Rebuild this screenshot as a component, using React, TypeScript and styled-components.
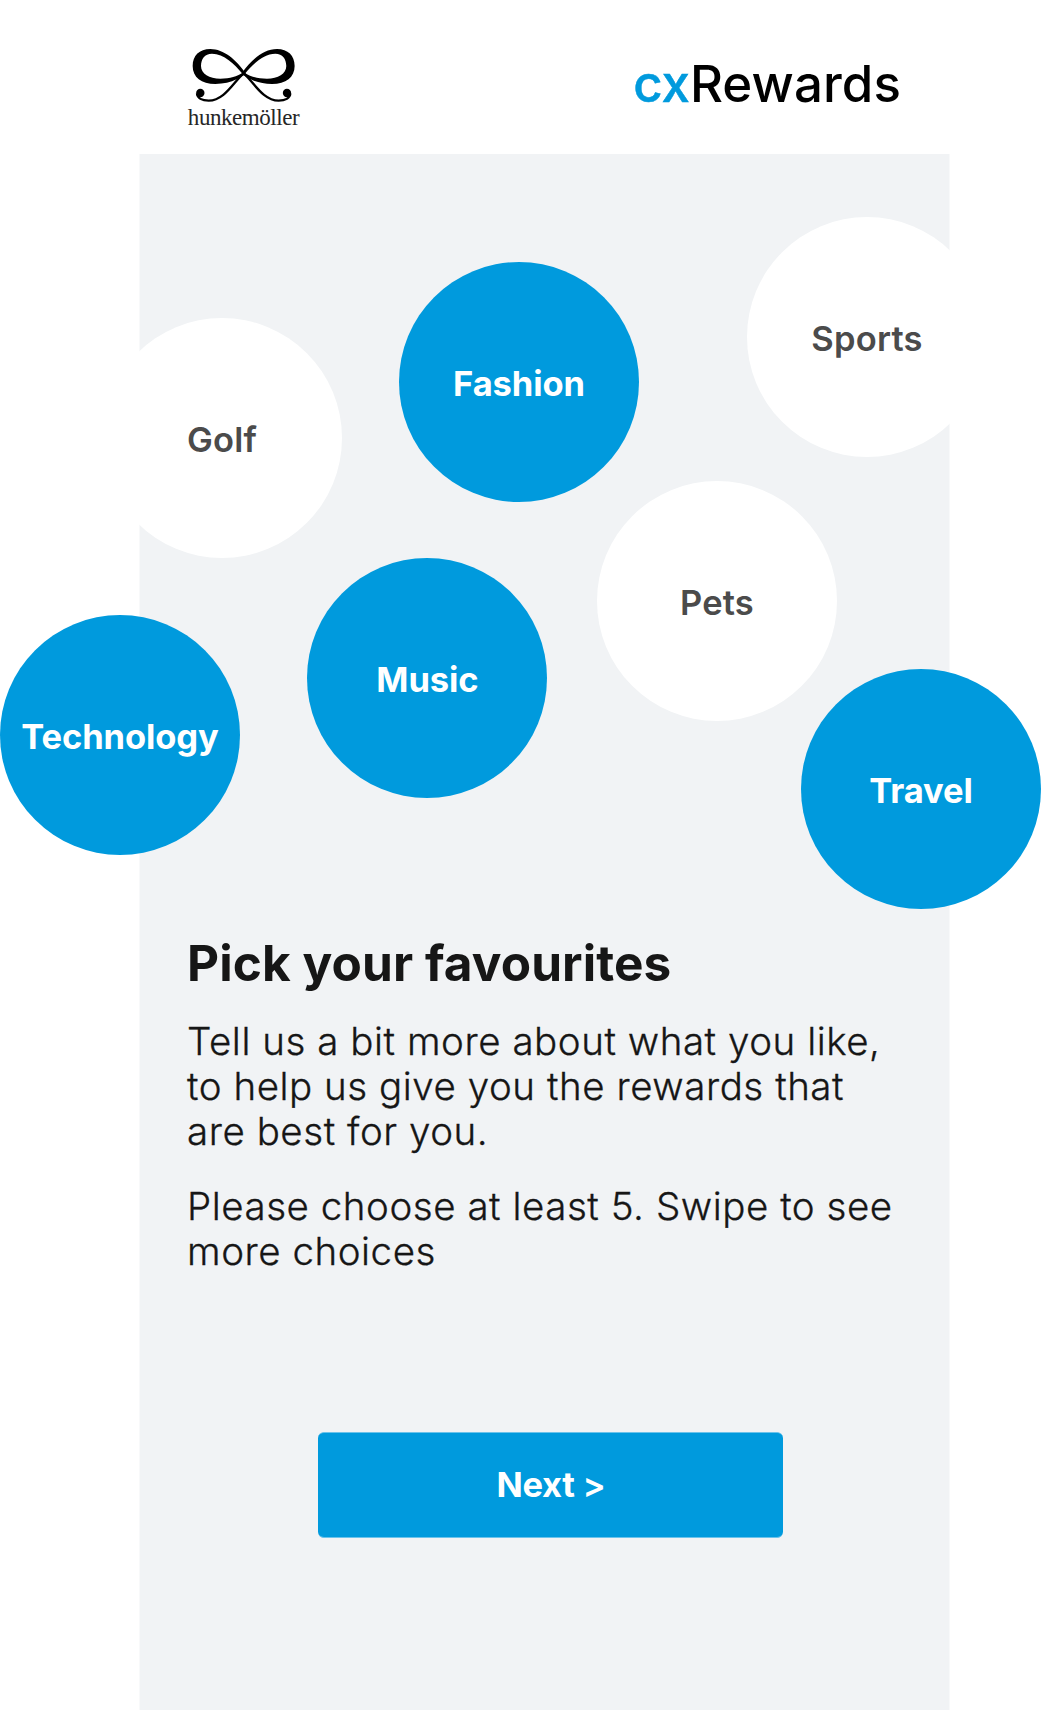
import React, { useState } from "react";
import styled, { createGlobalStyle } from "styled-components";

const BLUE = "#009add";
const PANEL = "#f1f3f5";
const INK = "#161616";
const SANS = `Inter, "Liberation Sans", sans-serif`;

const GlobalStyle = createGlobalStyle`
  *, *::before, *::after { box-sizing: border-box; }
  body { margin: 0; background: #fff; font-family: ${SANS}; overflow-x: hidden; }
`;

const Page = styled.div`
  display: flex;
  flex-direction: column;
  width: 811px;
  min-height: 1710px;
  margin-left: 139px;
`;

const Header = styled.header`
  display: flex;
  justify-content: space-between;
  align-items: flex-start;
  height: 154px;
  padding: 48px 49px 0 49px;
  background: #fff;
`;

const PartnerLogo = styled.div`
  display: flex;
  flex-direction: column;
  align-items: center;
  gap: 2px;
  width: 111px;

  svg {
    display: block;
  }
`;

const PartnerName = styled.span`
  font: 23px/26px "Liberation Serif", serif;
  letter-spacing: -0.45px;
  white-space: nowrap;
  color: #262626;
`;

const Wordmark = styled.div`
  margin-top: 6px;
  font-size: 51px;
  font-weight: 500;
  line-height: 60px;
  letter-spacing: 0.1px;
  color: #000;
`;

const WordmarkAccent = styled.span`
  color: ${BLUE};
  letter-spacing: 0;
  -webkit-text-stroke: 0.5px ${BLUE};
`;

const Panel = styled.main`
  flex: 1;
  display: flex;
  flex-direction: column;
  background: ${PANEL};
  background-clip: padding-box;
  border: solid #f8f9fa;
  border-width: 0 1px;
`;

const BubbleField = styled.div`
  position: relative;
  height: 779px;
`;

const Bubble = styled.button<{ $x: number; $y: number; $selected: boolean }>`
  position: absolute;
  left: ${(p) => p.$x}px;
  top: ${(p) => p.$y}px;
  display: flex;
  align-items: center;
  justify-content: center;
  width: 240px;
  height: 240px;
  padding: 3px 0 0;
  border: 0;
  border-radius: 50%;
  background: ${(p) => (p.$selected ? BLUE : "#fff")};
  color: ${(p) => (p.$selected ? "#fff" : "#4b4b4b")};
  font-family: ${SANS};
  font-size: 34.5px;
  font-weight: ${(p) => (p.$selected ? 700 : 600)};
  letter-spacing: ${(p) => (p.$selected ? -0.1 : 0.2)}px;
  cursor: pointer;
`;

const Copy = styled.section`
  display: flex;
  flex-direction: column;
  padding: 0 47px;
  color: ${INK};
`;

const Title = styled.h1`
  margin: 0 0 26px;
  font-size: 49.5px;
  font-weight: 700;
  line-height: 60px;
  letter-spacing: 0.1px;
`;

const Paragraph = styled.p`
  margin: 0 0 30px;
  font-size: 38.5px;
  font-weight: 300;
  line-height: 45px;
  letter-spacing: 0.54px;
  white-space: nowrap;
  -webkit-text-stroke: 0.3px ${INK};

  &:last-child {
    margin-bottom: 0;
  }
`;

const NextButton = styled.button`
  width: 465px;
  height: 106px;
  margin: 158px 0 0 178px;
  padding: 0 0 2px 1px;
  border: solid #6cc3eb;
  border-width: 1px 0;
  border-radius: 6px;
  background: ${BLUE};
  color: #fff;
  font-family: ${SANS};
  font-size: 34.5px;
  font-weight: 700;
  letter-spacing: -0.3px;
  cursor: pointer;
`;

const Chevron = styled.span`
  font-weight: 600;
`;

interface Interest {
  name: string;
  x: number;
  y: number;
  selected: boolean;
}

const INTERESTS: Interest[] = [
  { name: "Golf", x: -38, y: 164, selected: false },
  { name: "Fashion", x: 259, y: 108.4, selected: true },
  { name: "Sports", x: 607, y: 63.4, selected: false },
  { name: "Pets", x: 457, y: 327.4, selected: false },
  { name: "Music", x: 167.4, y: 404, selected: true },
  { name: "Technology", x: -140, y: 461, selected: true },
  { name: "Travel", x: 661, y: 515, selected: true },
];

const BowHalf = () => (
  <>
    <path
      fillRule="evenodd"
      d="M180 87C154 48 115 15 75 15C42 15 22 35 22 66C22 100 48 120 90 120C115 120 136 115 154 106L180 91ZM170 88C149 61 115 29 80 29C58 29 47 45 47 66C47 90 72 104 105 104C135 104 156 97 170 88Z"
    />
    <path
      d="M175 88C146 112 118 170 70 170C50 170 36 162 35 148"
      fill="none"
      stroke="#000"
      strokeWidth="7"
    />
    <circle cx="45" cy="147" r="12.5" />
  </>
);

const Bow = () => (
  <svg width="103.3" height="54.7" viewBox="20 12 310 164" aria-hidden="true">
    <BowHalf />
    <g transform="translate(350 0) scale(-1 1)">
      <BowHalf />
    </g>
  </svg>
);

export default function App() {
  const [interests, setInterests] = useState(INTERESTS);

  const toggle = (name: string) =>
    setInterests((list) =>
      list.map((i) => (i.name === name ? { ...i, selected: !i.selected } : i))
    );

  return (
    <>
      <GlobalStyle />
      <Page>
        <Header>
          <PartnerLogo>
            <Bow />
            <PartnerName>hunkemöller</PartnerName>
          </PartnerLogo>
          <Wordmark>
            <WordmarkAccent>cx</WordmarkAccent>Rewards
          </Wordmark>
        </Header>
        <Panel>
          <BubbleField>
            {interests.map((i) => (
              <Bubble
                key={i.name}
                $x={i.x}
                $y={i.y}
                $selected={i.selected}
                onClick={() => toggle(i.name)}
              >
                {i.name}
              </Bubble>
            ))}
          </BubbleField>
          <Copy>
            <Title>Pick your favourites</Title>
            <Paragraph>
              Tell us a bit more about what you like,
              <br />
              to help us give you the rewards that
              <br />
              are best for you.
            </Paragraph>
            <Paragraph>
              Please choose at least 5. Swipe to see
              <br />
              more choices
            </Paragraph>
          </Copy>
          <NextButton>
            Next <Chevron>&gt;</Chevron>
          </NextButton>
        </Panel>
      </Page>
    </>
  );
}
